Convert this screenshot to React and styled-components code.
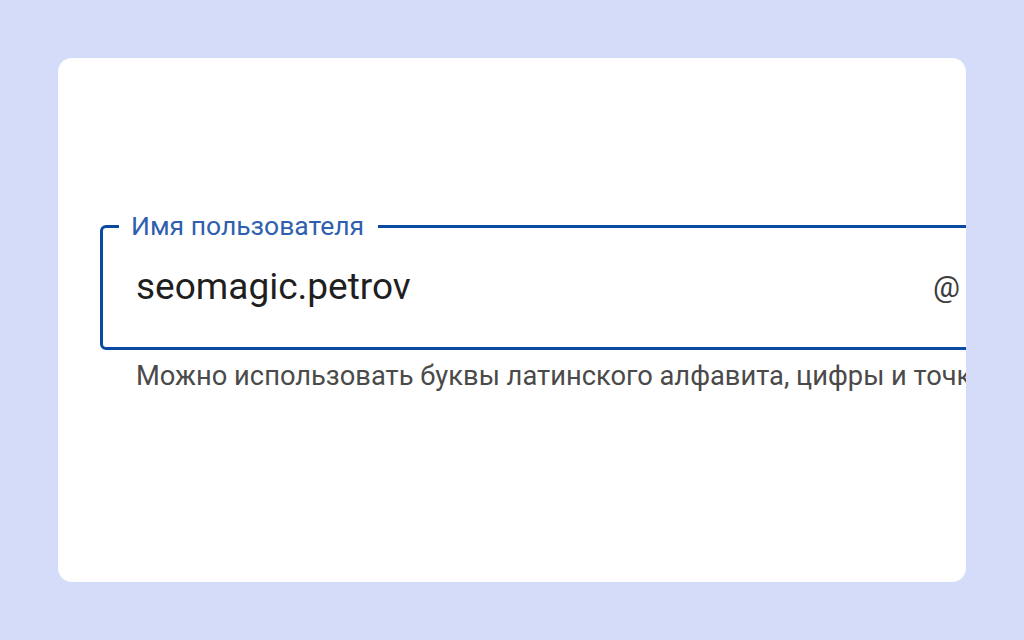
import styled, { createGlobalStyle } from "styled-components";

const GlobalStyle = createGlobalStyle`
  html, body {
    margin: 0;
    padding: 0;
    background: #d4dcfa;
    font-family: Roboto, "Noto Sans", Arial, sans-serif;
  }
`;

const Page = styled.div`
  width: 1024px;
  height: 640px;
  padding: 58px;
  box-sizing: border-box;
`;

const Card = styled.div`
  height: 524px;
  background: #fff;
  border-radius: 14px;
  overflow: hidden;
  padding: 154px 0 0 42px;
  box-sizing: border-box;
`;

const Field = styled.fieldset`
  width: 900px;
  height: 138px;
  margin: 0;
  padding: 0 37px 0 33px;
  box-sizing: border-box;
  border: 3px solid #0b4aa2;
  border-radius: 6px;
  display: flex;
  align-items: center;
`;

const Legend = styled.legend`
  margin-left: -17px;
  padding: 0 14px 0 12px;
  font-size: 26.5px;
  line-height: 28px;
  color: #2f5fae;
`;

const Row = styled.div`
  flex: 1;
  display: flex;
  align-items: center;
  justify-content: space-between;
  margin-top: -14px;
`;

const Value = styled.span`
  font-size: 37px;
  color: #1f1f1f;
`;

const Suffix = styled.span`
  font-size: 30px;
  color: #3c3c3c;
`;

const Hint = styled.div`
  margin: 10px 0 0 36px;
  font-size: 27.3px;
  color: #4a4a4a;
  white-space: nowrap;
`;

export default function App() {
  return (
    <>
      <GlobalStyle />
      <Page>
        <Card>
          <Field>
            <Legend>Имя пользователя</Legend>
            <Row>
              <Value>seomagic.petrov</Value>
              <Suffix>@</Suffix>
            </Row>
          </Field>
          <Hint>Можно использовать буквы латинского алфавита, цифры и точку</Hint>
        </Card>
      </Page>
    </>
  );
}
